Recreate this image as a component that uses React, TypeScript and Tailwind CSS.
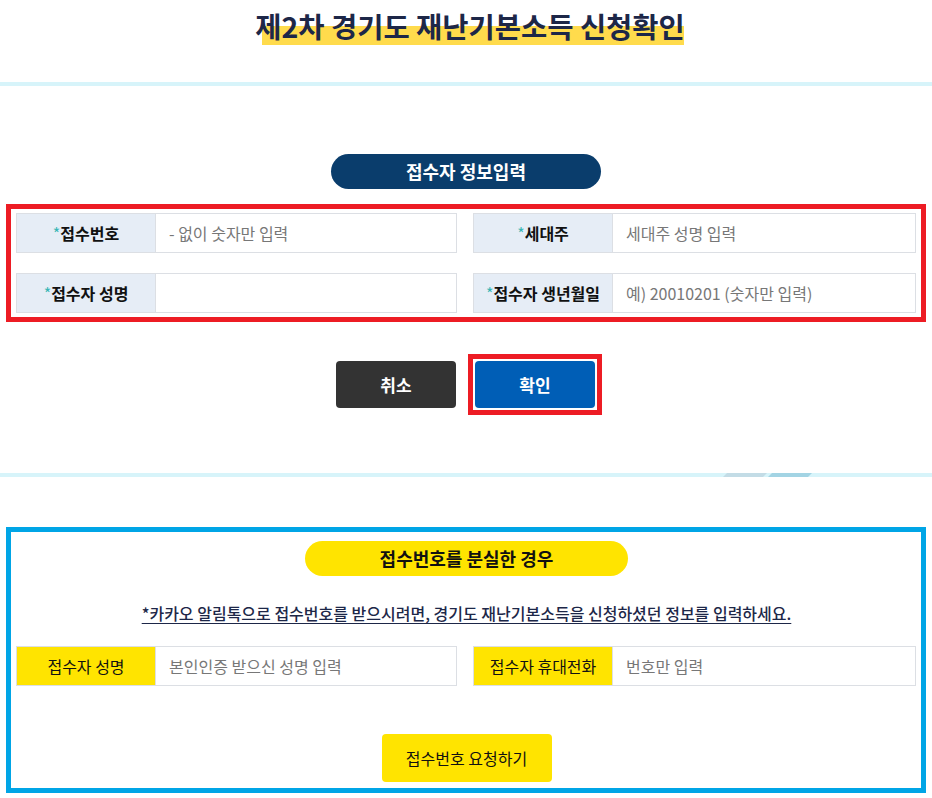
import React from "react";

const font = { fontFamily: '"Noto Sans CJK KR", "Noto Sans", sans-serif' };

function Field({
  label,
  placeholder,
  required,
  yellow,
}: {
  label: string;
  placeholder?: string;
  required?: boolean;
  yellow?: boolean;
}) {
  return (
    <div className="flex h-[40px] border border-[#dcdfe4]">
      <div
        className={
          "flex w-[139px] shrink-0 items-center justify-center border-r border-[#dcdfe4] text-[16px] text-[#111] " +
          (yellow ? "bg-[#ffe400] font-normal" : "bg-[#e6edf6] font-bold")
        }
      >
        {required && <span className="font-normal text-[#37b6b4]">*</span>}
        {label}
      </div>
      <input
        className="min-w-0 flex-1 bg-white pl-[13px] text-[16px] text-[#333] outline-none placeholder:text-[#777]"
        placeholder={placeholder}
      />
    </div>
  );
}

function Line({ deco }: { deco?: boolean }) {
  return (
    <div className="h-[4px] w-full bg-[#d7f4fa]">
      {deco && (
        <svg width="932" height="4" viewBox="0 0 932 4" className="block">
          <polygon points="727,0 767,0 763,4 723,4" fill="#c3dce6" />
          <polygon points="772,0 812,0 808,4 768,4" fill="#a3d4e4" />
        </svg>
      )}
    </div>
  );
}

export default function App() {
  return (
    <div className="h-[798px] w-[932px] overflow-hidden bg-white" style={font}>
      {/* Title */}
      <div className="flex h-[82px] justify-center pt-[6px] pl-[8px]">
        <h1 className="relative h-[40px] text-[28.5px] font-bold leading-[40px] text-[#1d2748]">
          <span className="absolute left-[7px] right-[1px] top-[20px] h-[19px] bg-[#ffdb4c]" />
          <span className="relative">제2차 경기도 재난기본소득 신청확인</span>
        </h1>
      </div>
      <Line />

      {/* Section 1 */}
      <div className="pt-[68px]">
        <div className="mx-auto flex h-[35px] w-[270px] items-center justify-center rounded-full bg-[#0a3d6c] text-[18px] font-bold text-white">
          접수자 정보입력
        </div>
        <div className="mx-[6px] mt-[15px] border-[5px] border-[#ed1c24] pb-[4px] pl-[5px] pr-[4px] pt-[4px]">
          <div className="grid grid-cols-[441px_443px] gap-x-[16px] gap-y-[20px]">
            <Field label="접수번호" placeholder="- 없이 숫자만 입력" required />
            <Field label="세대주" placeholder="세대주 성명 입력" required />
            <Field label="접수자 성명" required />
            <Field label="접수자 생년월일" placeholder="예) 20010201 (숫자만 입력)" required />
          </div>
        </div>
        <div className="mt-[32px] flex items-center justify-center gap-[12px] pl-[6px]">
          <button className="h-[47px] w-[120px] rounded-[4px] bg-[#333333] text-[17px] font-bold text-white">
            취소
          </button>
          <div className="border-[5px] border-[#ed1c24] p-[2px]">
            <button className="block h-[47px] w-[120px] rounded-[4px] bg-[#005eb6] text-[17px] font-bold text-white">
              확인
            </button>
          </div>
        </div>
      </div>

      <div className="mt-[58px]">
        <Line deco />
      </div>

      {/* Section 2 */}
      <div className="mx-[6px] mt-[50px] h-[266px] border-[5px] border-[#00a5e6] pl-[5px] pr-[4px] pt-[9px]">
        <div className="mx-auto flex h-[35px] w-[323px] items-center justify-center rounded-full bg-[#ffe400] text-[18px] font-bold text-[#111]">
          접수번호를 분실한 경우
        </div>
        <p className="mt-[26px] text-center text-[16px] font-medium leading-[22px] text-[#1d2748] underline underline-offset-[3px]">
          *카카오 알림톡으로 접수번호를 받으시려면, 경기도 재난기본소득을 신청하셨던 정보를 입력하세요.
        </p>
        <div className="mt-[22px] grid grid-cols-[441px_443px] gap-x-[16px]">
          <Field label="접수자 성명" placeholder="본인인증 받으신 성명 입력" yellow />
          <Field label="접수자 휴대전화" placeholder="번호만 입력" yellow />
        </div>
        <div className="mt-[48px] flex justify-center">
          <button className="h-[48px] w-[170px] rounded-[4px] bg-[#ffe400] text-[16px] text-[#111]">
            접수번호 요청하기
          </button>
        </div>
      </div>
    </div>
  );
}
